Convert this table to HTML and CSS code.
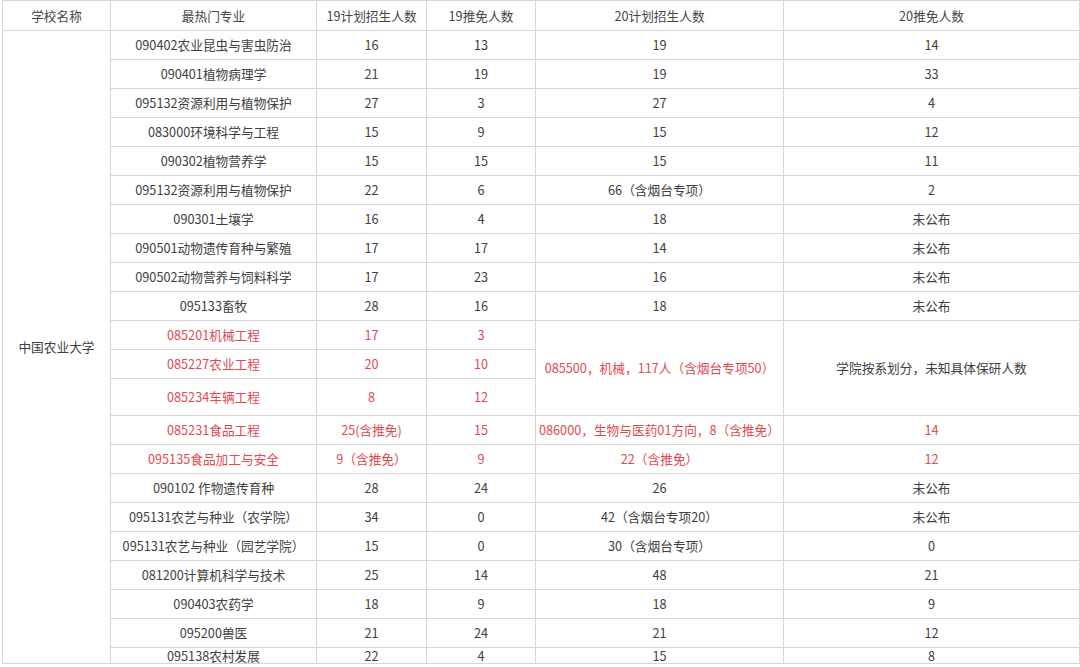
FILE: index.html
```html
<!DOCTYPE html>
<html lang="zh">
<head>
<meta charset="utf-8">
<link rel="stylesheet" href="styles.css">
</head>
<body>
<table class="tbl">
<colgroup>
<col class="c1"><col class="c2"><col class="c3"><col class="c4"><col class="c5"><col class="c6">
</colgroup>
<thead>
<tr class="hd"><th>学校名称</th><th>最热门专业</th><th>19计划招生人数</th><th>19推免人数</th><th>20计划招生人数</th><th>20推免人数</th></tr>
</thead>
<tbody>
<tr><td rowspan="22" class="school">中国农业大学</td><td>090402农业昆虫与害虫防治</td><td>16</td><td>13</td><td>19</td><td>14</td></tr>
<tr><td>090401植物病理学</td><td>21</td><td>19</td><td>19</td><td>33</td></tr>
<tr><td>095132资源利用与植物保护</td><td>27</td><td>3</td><td>27</td><td>4</td></tr>
<tr><td>083000环境科学与工程</td><td>15</td><td>9</td><td>15</td><td>12</td></tr>
<tr><td>090302植物营养学</td><td>15</td><td>15</td><td>15</td><td>11</td></tr>
<tr><td>095132资源利用与植物保护</td><td>22</td><td>6</td><td>66（含烟台专项）</td><td>2</td></tr>
<tr><td>090301土壤学</td><td>16</td><td>4</td><td>18</td><td>未公布</td></tr>
<tr><td>090501动物遗传育种与繁殖</td><td>17</td><td>17</td><td>14</td><td>未公布</td></tr>
<tr><td>090502动物营养与饲料科学</td><td>17</td><td>23</td><td>16</td><td>未公布</td></tr>
<tr><td>095133畜牧</td><td>28</td><td>16</td><td>18</td><td>未公布</td></tr>
<tr class="red"><td>085201机械工程</td><td>17</td><td>3</td><td rowspan="3">085500，机械，117人（含烟台专项50）</td><td rowspan="3" class="dark">学院按系划分，未知具体保研人数</td></tr>
<tr class="red"><td>085227农业工程</td><td>20</td><td>10</td></tr>
<tr class="red tall"><td>085234车辆工程</td><td>8</td><td>12</td></tr>
<tr class="red"><td>085231食品工程</td><td>25(含推免)</td><td>15</td><td>086000，生物与医药01方向，8（含推免）</td><td>14</td></tr>
<tr class="red"><td>095135食品加工与安全</td><td>9（含推免）</td><td>9</td><td>22（含推免）</td><td>12</td></tr>
<tr><td>090102 作物遗传育种</td><td>28</td><td>24</td><td>26</td><td>未公布</td></tr>
<tr><td>095131农艺与种业（农学院）</td><td>34</td><td>0</td><td>42（含烟台专项20）</td><td>未公布</td></tr>
<tr><td>095131农艺与种业（园艺学院）</td><td>15</td><td>0</td><td>30（含烟台专项）</td><td>0</td></tr>
<tr><td>081200计算机科学与技术</td><td>25</td><td>14</td><td>48</td><td>21</td></tr>
<tr><td>090403农药学</td><td>18</td><td>9</td><td>18</td><td>9</td></tr>
<tr><td>095200兽医</td><td>21</td><td>24</td><td>21</td><td>12</td></tr>
<tr class="last"><td>095138农村发展</td><td>22</td><td>4</td><td>15</td><td>8</td></tr>
</tbody>
</table>
</body>
</html>
```

FILE: styles.css
```css
html, body {
  margin: 0;
  padding: 0;
  background: #ffffff;
}
body {
  padding-left: 2px;
  font-family: "Noto Sans CJK SC", "Noto Sans", sans-serif;
  font-size: 12.7px;
  color: #404040;
}
.tbl {
  border-collapse: collapse;
  table-layout: fixed;
  width: 1077px;
}
.c1 { width: 108px; }
.c2 { width: 206px; }
.c3 { width: 110px; }
.c4 { width: 109px; }
.c5 { width: 248px; }
.c6 { width: 296px; }
.tbl th,
.tbl td {
  border: 1px solid #d6d6d6;
  padding: 0;
  height: 28px;
  text-align: center;
  vertical-align: middle;
  font-weight: normal;
  line-height: 16px;
  white-space: nowrap;
}
.tbl th {
  color: #474747;
}
.hd th {
  height: 29px;
}
.red td {
  color: #e24a4f;
}
.red td.dark {
  color: #404040;
}
.tall td {
  height: 36px;
}
.last td {
  height: 15px;
  line-height: 15px;
}
```
